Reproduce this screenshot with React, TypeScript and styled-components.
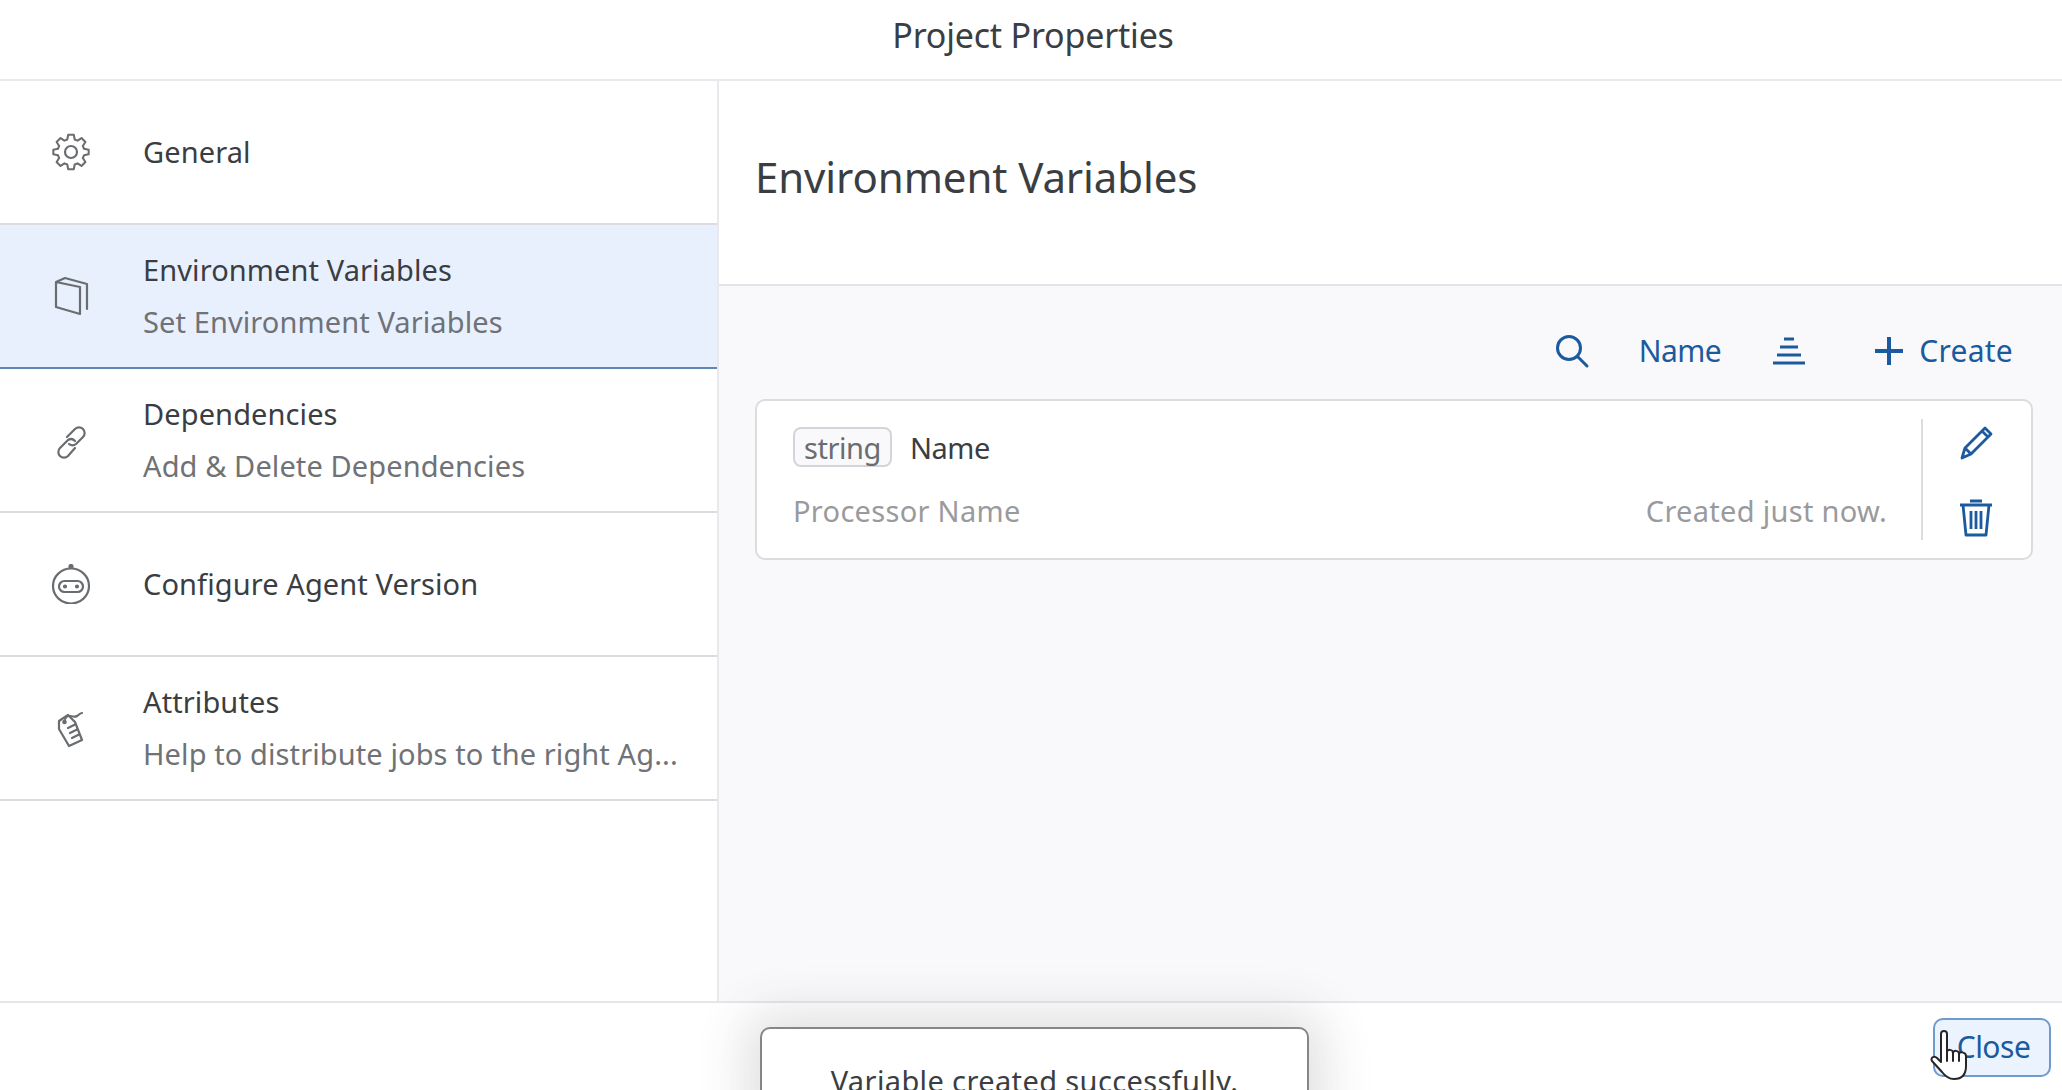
import styled, { createGlobalStyle } from "styled-components";

const GlobalStyle = createGlobalStyle`
  html, body {
    margin: 0;
    padding: 0;
    background: #fff;
    font-family: "Noto Sans", "Open Sans", sans-serif;
  }
  * {
    box-sizing: border-box;
  }
`;

const Page = styled.div`
  position: relative;
  height: 100vh;
  display: flex;
  flex-direction: column;
  overflow: hidden;
  color: #3a3e42;
`;

const Header = styled.header`
  height: 81px;
  flex: none;
  display: flex;
  justify-content: center;
  align-items: center;
  padding: 0 0 9px 4px;
  border-bottom: 2px solid #e9e8ec;
  font-size: 34px;
  letter-spacing: -0.2px;
`;

const Body = styled.div`
  flex: 1;
  min-height: 0;
  display: flex;
`;

const Sidebar = styled.nav`
  width: 719px;
  flex: none;
  border-right: 2px solid #e9e8ec;
`;

const Row = styled.div<{ $active?: boolean }>`
  height: 144px;
  display: flex;
  align-items: center;
  padding-left: 51px;
  background: ${(p) => (p.$active ? "#e8f0fe" : "#fff")};
  border-bottom: 2px solid ${(p) => (p.$active ? "#5f87b3" : "#dcdbe0")};
`;

const RowIcon = styled.svg`
  width: 40px;
  height: 40px;
  flex: none;
  fill: none;
  stroke: #6a6d70;
  stroke-width: 2.200;
  stroke-linejoin: round;
  stroke-linecap: round;
`;

const RowText = styled.div`
  margin-left: 52px;
  display: flex;
  flex-direction: column;
  gap: 20px;
  min-width: 0;
  width: 540px;
`;

const RowTitle = styled.div`
  font-size: 29px;
  line-height: 32px;
  letter-spacing: 0.1px;
`;

const RowSub = styled.div`
  font-size: 29px;
  line-height: 32px;
  letter-spacing: 0.1px;
  color: #6f7276;
  white-space: nowrap;
`;

const Main = styled.main`
  flex: 1;
  min-width: 0;
  display: flex;
  flex-direction: column;
  background: #f9f8fb;
`;

const MainHeader = styled.div`
  height: 205px;
  flex: none;
  display: flex;
  align-items: flex-start;
  padding: 64px 0 0 36px;
  background: #fff;
  border-bottom: 2px solid #e4e3e8;
  font-size: 42px;
  line-height: 64px;
  letter-spacing: -0.1px;
`;

const Toolbar = styled.div`
  height: 113px;
  flex: none;
  display: flex;
  align-items: center;
  justify-content: flex-end;
  padding: 16px 49px 0 0;
  color: #1c5a9e;
`;

const ToolIcon = styled.svg`
  width: 36px;
  height: 36px;
  flex: none;
  fill: none;
  stroke: #1c5a9e;
  stroke-width: 3;
  stroke-linecap: round;
`;

const ToolLabel = styled.span`
  font-size: 30px;
  letter-spacing: 0.25px;
`;

const NameSort = styled(ToolLabel)`
  margin: 0 50px 0 49px;
  letter-spacing: -0.5px;
`;

const SortIcon = styled(ToolIcon)`
  stroke-linecap: butt;
  stroke-width: 3.200;
`;

const CreateIcon = styled(ToolIcon)`
  margin: 0 12px 0 64px;
  stroke-linecap: butt;
  stroke-width: 4;
`;

const Card = styled.div`
  margin: 0 29px 0 36px;
  height: 161px;
  display: flex;
  background: #fff;
  border: 2px solid #dcdcdf;
  border-radius: 10px;
`;

const CardInfo = styled.div`
  flex: 1;
  min-width: 0;
  padding: 26px 34px 0 36px;
  display: flex;
  flex-direction: column;
  gap: 24px;
`;

const CardTop = styled.div`
  display: flex;
  align-items: center;
  gap: 18px;
  font-size: 29px;
  letter-spacing: -0.45px;
`;

const TypeTag = styled.span`
  height: 40px;
  padding: 0 9px;
  display: flex;
  align-items: center;
  background: #f9f8fb;
  border: 2px solid #d5d4d9;
  border-radius: 8px;
  color: #6a6d70;
`;

const CardBottom = styled.div`
  display: flex;
  justify-content: space-between;
  font-size: 29px;
  line-height: 40px;
  letter-spacing: 0.3px;
  color: #9a9a9d;
`;

const CardActions = styled.div`
  width: 110px;
  margin: 18px 0;
  padding: 4px 2px 3px 0;
  flex: none;
  display: flex;
  flex-direction: column;
  align-items: center;
  justify-content: space-between;
  border-left: 2px solid #dcdcdf;
`;

const ActionIcon = styled.svg`
  width: 36px;
  height: 40px;
  fill: none;
  stroke: #1c5a9e;
  stroke-width: 2.800;
  stroke-linejoin: round;
`;

const Footer = styled.footer`
  height: 89px;
  flex: none;
  display: flex;
  align-items: center;
  justify-content: flex-end;
  padding: 2px 11px 0 0;
  background: #fff;
  border-top: 2px solid #e6e5e9;
`;

const CloseButton = styled.button`
  width: 118px;
  height: 59px;
  background: #ebf3fe;
  border: 2px solid #6e9bcb;
  border-radius: 10px;
  color: #1c5a9e;
  font-family: inherit;
  font-size: 30px;
  letter-spacing: -0.5px;
  padding: 0 0 2px 3px;
`;

const Toast = styled.div`
  position: absolute;
  left: 760px;
  top: 1027px;
  width: 549px;
  height: 110px;
  padding-top: 32px;
  text-align: center;
  background: #fff;
  border: 2px solid #85858a;
  border-radius: 10px;
  box-shadow: 0 0 50px 14px rgba(60, 60, 70, 0.16);
  font-size: 29px;
  line-height: 40px;
  letter-spacing: 0.38px;
`;

const HandCursor = styled.svg`
  position: absolute;
  left: 1930px;
  top: 1029px;
  width: 42px;
  height: 52px;
  fill: #fff;
  stroke: #26262a;
  stroke-width: 2;
  stroke-linejoin: round;
  stroke-linecap: round;
`;

const items = [
  {
    title: "General",
    icon: (
      <>
        <path d="M17 3h6l1 5 3 1.300 4.300-2.800 4.200 4.200-2.800 4.300L34 18l5 1v5l-5 1-1.300 3 2.800 4.300-4.200 4.200-4.300-2.800-3 1.300-1 5h-6l-1-5-3-1.300-4.300 2.800-4.200-4.200 2.800-4.300L6 25l-5-1v-5l5-1 1.300-3-2.800-4.300 4.200-4.200 4.300 2.800 3-1.300z" transform="scale(.93) translate(1.500 0)" />
        <circle cx="20" cy="20" r="6" />
      </>
    ),
  },
  {
    title: "Environment Variables",
    sub: "Set Environment Variables",
    active: true,
    icon: <path d="M5 6v25l24 7V11L5 6l9-4 22 6v25" />,
  },
  {
    title: "Dependencies",
    sub: "Add & Delete Dependencies",
    icon: (
      <>
        <path d="M16 17l8-8a5.500 5.500 0 0 1 8 8l-7 7a5.500 5.500 0 0 1-7 0" />
        <path d="M24 21a5.500 5.500 0 0 0-7-1l-8 8a5.500 5.500 0 0 0 8 8l7-8" />
      </>
    ),
  },
  {
    title: "Configure Agent Version",
    icon: (
      <>
        <ellipse cx="20" cy="22" rx="18" ry="17.500" />
        <circle cx="20" cy="2.500" r="1.500" fill="#6a6d70" />
        <rect x="8" y="17" width="24" height="11" rx="5.500" />
        <circle cx="14" cy="22.500" r="1" fill="#6a6d70" />
        <circle cx="26" cy="22.500" r="1" fill="#6a6d70" />
      </>
    ),
  },
  {
    title: "Attributes",
    sub: "Help to distribute jobs to the right Agents",
    icon: (
      <>
        <path d="M8 13l9-6 7 7 7 18-13 6L8 21z" />
        <circle cx="13.500" cy="14" r="1.200" />
        <path d="M14 11c3-7 8 0 12-3 2-1 3-3 5-3M17 20l7-3.500M19 25l7-3.500M21 30l7-3.500" />
      </>
    ),
  },
];

const App = () => (
  <Page>
    <GlobalStyle />
    <Header>Project Properties</Header>
    <Body>
      <Sidebar>
        {items.map((item) => (
          <Row key={item.title} $active={item.active}>
            <RowIcon viewBox="0 0 40 40">{item.icon}</RowIcon>
            <RowText>
              <RowTitle>{item.title}</RowTitle>
              {item.sub && (
                <RowSub>
                  {item.sub.length > 40 ? "Help to distribute jobs to the right Ag..." : item.sub}
                </RowSub>
              )}
            </RowText>
          </Row>
        ))}
      </Sidebar>
      <Main>
        <MainHeader>Environment Variables</MainHeader>
        <Toolbar>
          <ToolIcon viewBox="0 0 36 36">
            <circle cx="15" cy="15" r="11.500" />
            <path d="M23.500 23.500L33 33" />
          </ToolIcon>
          <NameSort>Name</NameSort>
          <SortIcon viewBox="0 0 36 36">
            <path d="M13 6h10M9 14h18M6 22h24M2 30h32" />
          </SortIcon>
          <CreateIcon viewBox="0 0 36 36">
            <path d="M18 4v28M4 18h28" />
          </CreateIcon>
          <ToolLabel>Create</ToolLabel>
        </Toolbar>
        <Card>
          <CardInfo>
            <CardTop>
              <TypeTag>string</TypeTag>
              Name
            </CardTop>
            <CardBottom>
              <span>Processor Name</span>
              <span>Created just now.</span>
            </CardBottom>
          </CardInfo>
          <CardActions>
            <ActionIcon viewBox="0 0 36 40">
              <path d="M4 35l3-10L27 5l6 6-20 20zM7 25l6 6M24 8l6 6" />
            </ActionIcon>
            <ActionIcon viewBox="0 0 36 40">
              <path d="M2 8h32M5 8l3 30h20l3-30M12 4h12M13 14v18M18 14v18M23 14v18" />
            </ActionIcon>
          </CardActions>
        </Card>
      </Main>
    </Body>
    <Footer>
      <CloseButton>Close</CloseButton>
    </Footer>
    <Toast>Variable created successfully.</Toast>
    <HandCursor viewBox="0 0 42 52">
      <path d="M11 5c0-4 6-4 6 0v18c0-3 6-3 6 1 0-3 6-3 6 1 0-3 7-2 7 2v10c0 8-4 13-12 13-6 0-9-3-12-7L2 32c-2-3 2-6 5-3l4 4z" />
      <path d="M17 23v9M23 24v8M29 25v7" />
    </HandCursor>
  </Page>
);

export default App;
